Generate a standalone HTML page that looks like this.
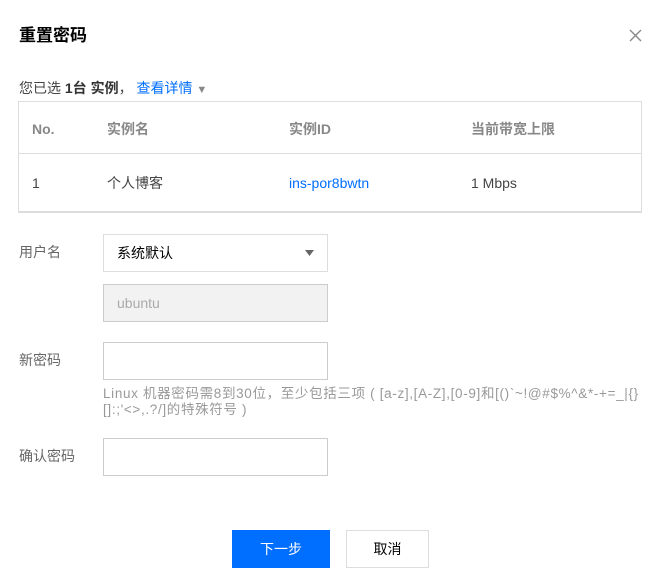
<!DOCTYPE html>
<html><head><meta charset="utf-8"><style>
*{margin:0;padding:0;box-sizing:border-box}
body{width:660px;height:584px;background:#fff;font-family:"Liberation Sans","Noto Sans CJK SC",sans-serif;font-size:14px;color:#333;position:relative;overflow:hidden}
.a{position:absolute}
.box{position:absolute;border:1px solid #ccc;background:#fff}
.lbl{position:absolute;color:#666;font-size:14px;line-height:20px}
</style></head><body>
<div class="a" style="left:19px;top:25px;font-size:17px;font-weight:bold;color:#000;line-height:22px">重置密码</div>
<svg class="a" style="left:629px;top:29px" width="13" height="13" viewBox="0 0 13 13"><path d="M1 1L12 12M12 1L1 12" stroke="#888" stroke-width="1.4"/></svg>
<div class="a" style="left:19px;top:78px;line-height:20px;color:#444">您已选 <b style="color:#333">1台 实例</b>， <span style="color:#006eff">查看详情</span> <span style="color:#888;font-size:11px">▼</span></div>
<div class="a" style="left:18px;top:101px;width:624px;height:112px;border:1px solid #ddd;border-bottom:2px solid #ddd"></div>
<div class="a" style="left:19px;top:153px;width:622px;height:1px;background:#ddd"></div>
<div class="a" style="top:119px;left:32px;font-weight:bold;color:#888;line-height:20px">No.</div>
<div class="a" style="top:119px;left:107px;font-weight:bold;color:#888;line-height:20px">实例名</div>
<div class="a" style="top:119px;left:289px;font-weight:bold;color:#888;line-height:20px">实例ID</div>
<div class="a" style="top:119px;left:471px;font-weight:bold;color:#888;line-height:20px">当前带宽上限</div>
<div class="a" style="top:173px;left:32px;color:#444;line-height:20px">1</div>
<div class="a" style="top:173px;left:107px;color:#444;line-height:20px">个人博客</div>
<div class="a" style="top:173px;left:289px;color:#006eff;line-height:20px">ins-por8bwtn</div>
<div class="a" style="top:173px;left:471px;color:#444;line-height:20px">1 Mbps</div>
<div class="lbl" style="left:19px;top:242px">用户名</div>
<div class="box" style="left:103px;top:234px;width:225px;height:38px;border-color:#ddd"></div>
<div class="a" style="left:117px;top:243px;color:#000;line-height:20px">系统默认</div>
<svg class="a" style="left:305px;top:250px" width="9" height="6" viewBox="0 0 9 6"><path d="M0 0H9L4.5 6Z" fill="#666"/></svg>
<div class="box" style="left:103px;top:284px;width:225px;height:38px;background:#f2f2f2"></div>
<div class="a" style="left:117px;top:293px;color:#aaa;line-height:20px">ubuntu</div>
<div class="lbl" style="left:19px;top:350px">新密码</div>
<div class="box" style="left:103px;top:342px;width:225px;height:38px"></div>
<div class="a" style="left:103px;top:386px;color:#999;font-size:13.5px;line-height:16px;letter-spacing:0.66px;white-space:nowrap">Linux 机器密码需8到30位，至少包括三项 ( [a-z],[A-Z],[0-9]和[()`~!@#$%^&amp;*-+=_|{}<br>[]:;'&lt;&gt;,.?/]的特殊符号 )</div>
<div class="lbl" style="left:19px;top:446px">确认密码</div>
<div class="box" style="left:103px;top:438px;width:225px;height:38px"></div>
<div class="a" style="left:232px;top:530px;width:98px;height:38px;background:#006eff;color:#fff;text-align:center;line-height:38px">下一步</div>
<div class="a" style="left:346px;top:530px;width:83px;height:38px;border:1px solid #ddd;color:#000;text-align:center;line-height:36px">取消</div>
</body></html>
